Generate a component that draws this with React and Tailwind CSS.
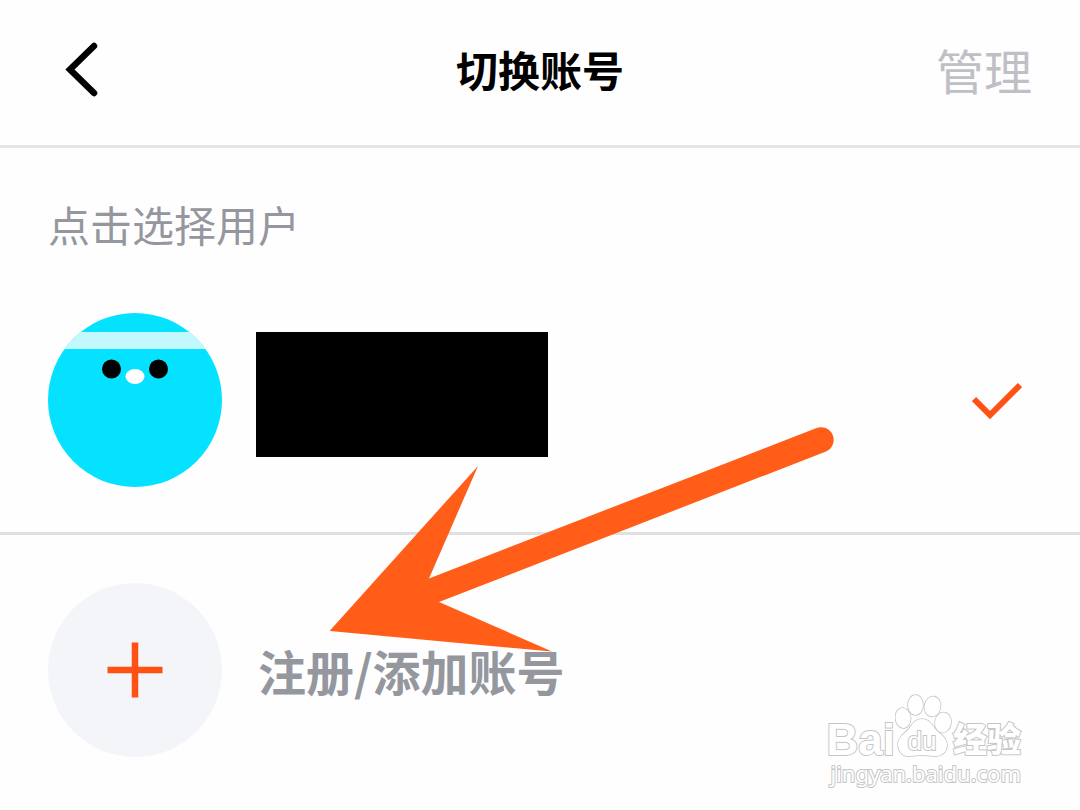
import React, { useState } from "react";

function BackIcon() {
  return (
    <svg width="36" height="58" viewBox="0 0 36 58" fill="none" aria-hidden="true">
      <path d="M30 6 L6 29.500 L30 53" stroke="#000" strokeWidth="6.500" strokeLinecap="round" strokeLinejoin="miter" />
    </svg>
  );
}

function Avatar() {
  return (
    <svg className="size-[174px] shrink-0" viewBox="0 0 174 174" aria-hidden="true">
      <defs>
        <clipPath id="face">
          <circle cx="87" cy="87" r="87" />
        </clipPath>
      </defs>
      <g clipPath="url(#face)">
        <rect width="174" height="174" fill="#05e2ff" />
        <rect y="19" width="174" height="17" fill="#c4f8ff" />
      </g>
      <circle cx="63.500" cy="56" r="9.500" fill="#000" />
      <circle cx="110.500" cy="56" r="9.500" fill="#000" />
      <ellipse cx="87" cy="63.500" rx="9.500" ry="7.500" fill="#fff" />
    </svg>
  );
}

function CheckIcon() {
  return (
    <svg width="50" height="38" viewBox="0 0 50 38" fill="none" aria-hidden="true">
      <path d="M2 18 L18 34 L48 4" stroke="#ff5113" strokeWidth="6" />
    </svg>
  );
}

function PlusIcon() {
  return (
    <svg width="56" height="56" viewBox="0 0 56 56" fill="none" aria-hidden="true">
      <path d="M28 0.500 V55.500 M0.500 28 H55.500" stroke="#ff5113" strokeWidth="6.500" />
    </svg>
  );
}

// flecha que señala la opcion de agregar cuenta
function Arrow() {
  return (
    <svg
      className="absolute left-[330px] top-[427px] pointer-events-none"
      width="504"
      height="226"
      viewBox="330 427 504 226"
      aria-hidden="true"
    >
      <path
        d="M329.500 631 L478 466 L429 578.500 L816 428.200 A12.600 12.600 0 0 1 826 451.500 L439 602 L552 651.500 Z"
        fill="#ff5d18"
      />
    </svg>
  );
}

function Paw() {
  return (
    <svg className="absolute inset-0" width="58" height="64" viewBox="0 0 58 64" fill="#fff" stroke="#c6c6c6" strokeWidth="1.600" aria-hidden="true">
      <path d="M27 25 C33 25 36 29 38 32 C42 39 52 42 52 51 C52 59 45 63 38 62 C32 61 22 61 16 62 C8 63 3 58 3 50 C3 42 12 39 16 32 C18 29 21 25 27 25 Z" />
      <ellipse cx="8" cy="24" rx="7.500" ry="10" transform="rotate(-6 8 24)" />
      <ellipse cx="20.500" cy="11" rx="7.500" ry="10" />
      <ellipse cx="37.500" cy="12.500" rx="8" ry="10" transform="rotate(10 37.500 12.500)" />
      <ellipse cx="48" cy="28.500" rx="8" ry="10" transform="rotate(8 48 28.500)" />
    </svg>
  );
}

function Watermark() {
  return (
    <div className="absolute right-[59px] top-[694px] flex flex-col items-end text-white [paint-order:stroke_fill] [-webkit-text-stroke:2px_#c6c6c6] pointer-events-none">
      <div className="flex h-16 items-end">
        <span className="font-['Liberation_Sans'] text-[44px] leading-[36px] font-bold">Bai</span>
        <span className="relative flex h-16 w-[58px] items-end justify-center pr-1">
          <Paw />
          <span className="relative font-['Liberation_Sans'] text-[26px] leading-[34px]">du</span>
        </span>
        <span className="text-[34px] leading-[40px] font-black">经验</span>
      </div>
      <span className="font-['Noto_Sans'] text-[22px] leading-[30px]">jingyan.baidu.com</span>
    </div>
  );
}

export default function App() {
  const [selected, setSelected] = useState(true);

  return (
    <div className="relative min-h-screen overflow-hidden bg-[#fefefe] font-['Noto_Sans_CJK_SC',sans-serif]">
      <header className="grid grid-cols-3 items-center border-b-[3px] border-[#e5e5e5] px-12 pt-[37px] pb-11">
        <button aria-label="返回" className="justify-self-start px-4">
          <BackIcon />
        </button>
        <h1 className="text-center text-[42px] leading-[64px] font-bold text-black">切换账号</h1>
        <button className="justify-self-end text-[48px] leading-[64px] text-[#bfc0c6]">管理</button>
      </header>

      <main>
        <section className="border-b-[3px] border-[#e0e0e0] px-12 pt-12 pb-[45px]">
          <h2 className="text-[42px] leading-[56px] text-[#95979f]">点击选择用户</h2>
          <button
            aria-pressed={selected}
            onClick={() => setSelected(!selected)}
            className="mt-[61px] flex w-full items-center gap-[34px]"
          >
            <Avatar />
            <span className="pb-[11px]">
              <span className="block h-[125px] w-[292px] bg-black"></span>
            </span>
            <span className="ml-auto pr-[10px]">{selected && <CheckIcon />}</span>
          </button>
        </section>

        <section className="px-12 pt-12 pb-12">
          <button className="flex w-full items-center gap-9">
            <span className="flex size-[174px] shrink-0 items-center justify-center rounded-full bg-[#f3f5f9]">
              <PlusIcon />
            </span>
            <span className="text-[48px] leading-[64px] font-bold text-[#95979f]">注册/添加账号</span>
          </button>
        </section>
      </main>

      <Arrow />
      <Watermark />
    </div>
  );
}
